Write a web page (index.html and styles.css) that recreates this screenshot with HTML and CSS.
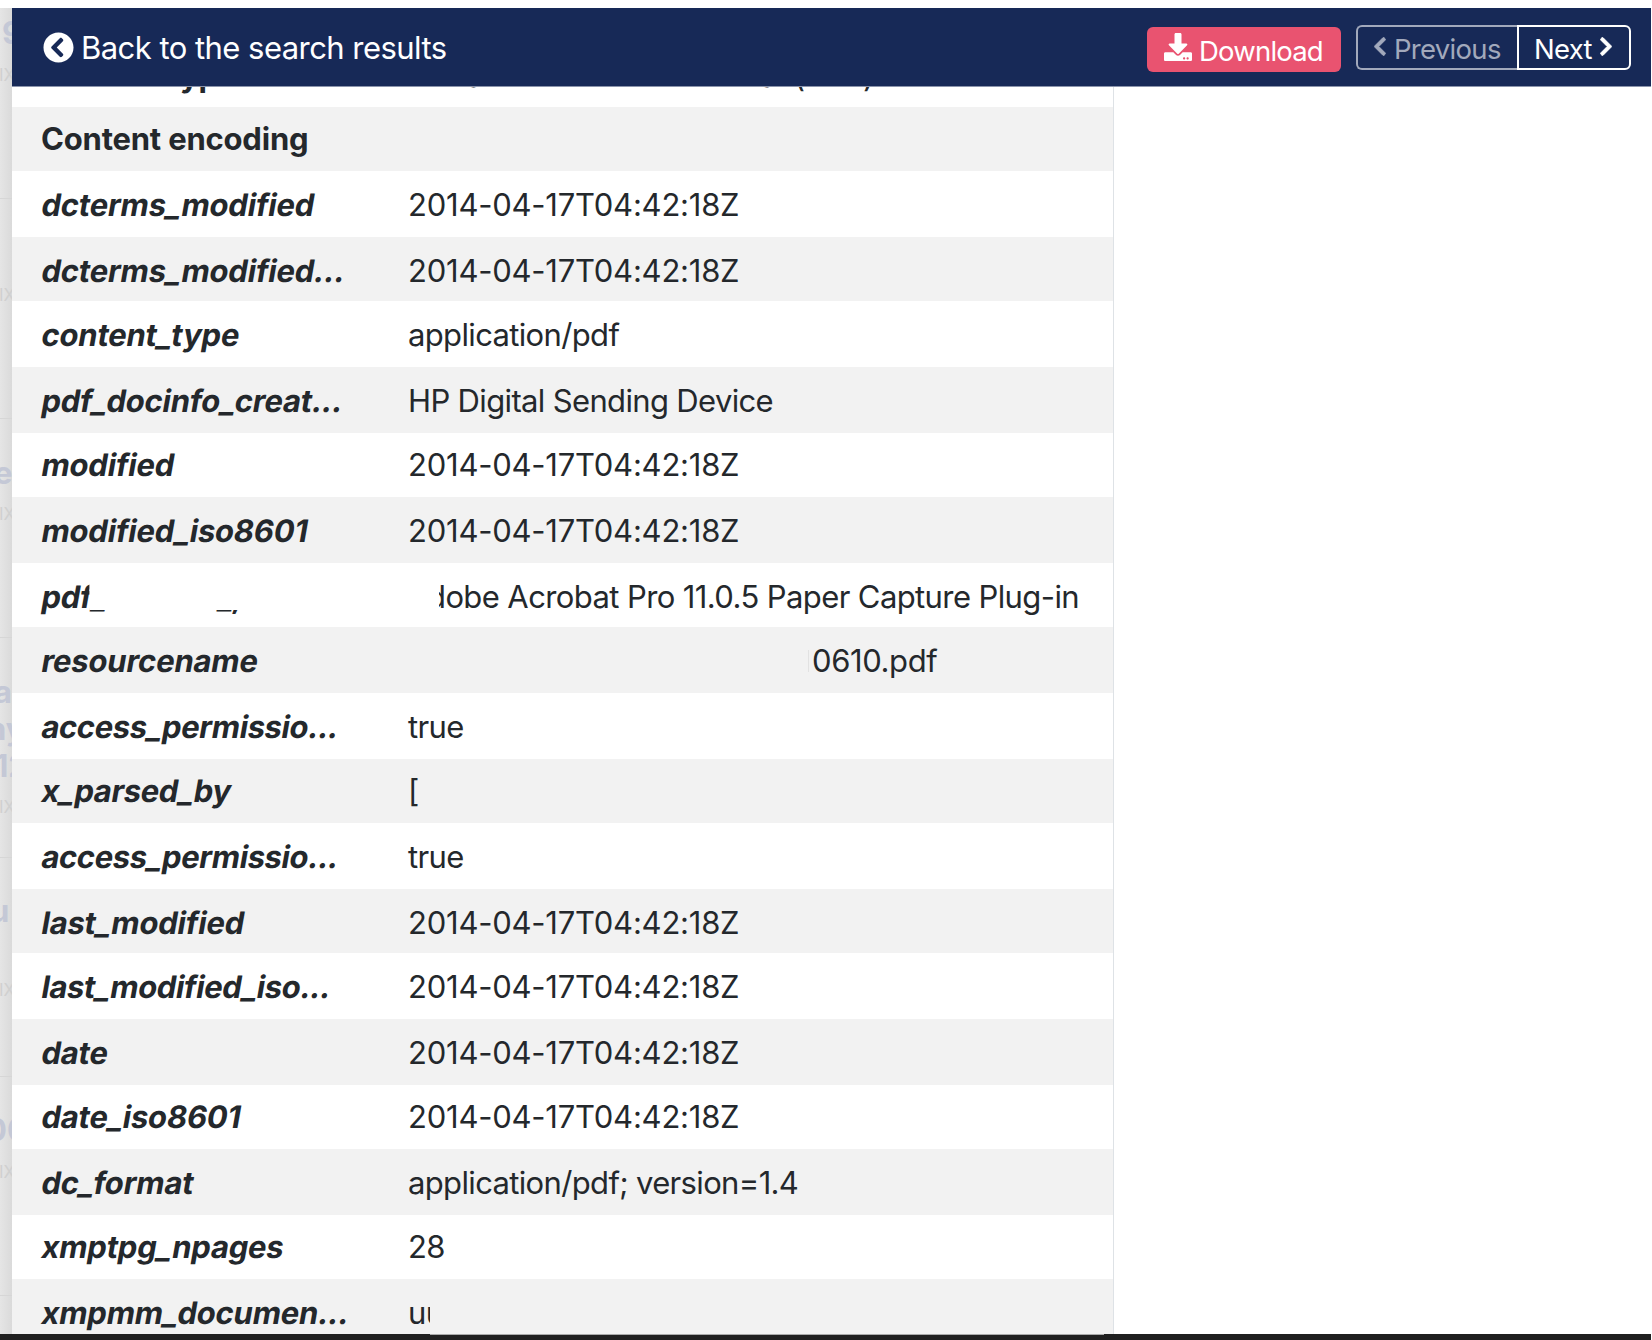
FILE: index.html
```html
<!DOCTYPE html>
<html lang="en">
<head>
<meta charset="utf-8">
<title>Document details</title>
<link rel="stylesheet" href="styles.css">
</head>
<body>
<div class="window">
  <div class="stage">
    <aside class="backdrop" aria-hidden="true">
      <span class="bd-title" style="top:6px;left:2px">9</span>
      <span class="bd-meta" style="top:54px">IX</span>
      <span class="bd-meta" style="top:274px">IX</span>
      <span class="bd-title" style="top:446px;left:-6px">e</span>
      <span class="bd-meta" style="top:493px">IX</span>
      <span class="bd-title" style="top:665px;left:-6px">a</span>
      <span class="bd-title" style="top:702px;left:-13px">ny</span>
      <span class="bd-title" style="top:739px;left:-5px">12</span>
      <span class="bd-meta" style="top:786px">IX</span>
      <span class="bd-title" style="top:884px;left:-10px">u</span>
      <span class="bd-meta" style="top:969px">IX</span>
      <span class="bd-title" style="top:1103px;left:-14px">00</span>
      <span class="bd-meta" style="top:1151px">IX</span>
      <i class="bd-rule" style="top:190px"></i>
      <i class="bd-rule" style="top:410px"></i>
      <i class="bd-rule" style="top:629px"></i>
      <i class="bd-rule" style="top:849px"></i>
      <i class="bd-rule" style="top:1068px"></i>
      <i class="bd-rule" style="top:1287px"></i>
    </aside>
    <main class="panel">
      <header class="topbar">
        <a class="back">
          <svg class="icon-back" viewBox="0 0 512 512"><path d="M256 504C119 504 8 393 8 256S119 8 256 8s248 111 248 248-111 248-248 248zM142.1 273l135.5 135.5c9.4 9.4 24.6 9.4 33.9 0l17-17c9.4-9.4 9.4-24.6 0-33.9L226.9 256l101.6-101.6c9.4-9.4 9.4-24.6 0-33.9l-17-17c-9.4-9.4-24.6-9.4-33.9 0L142.1 239c-9.4 9.4-9.4 24.6 0 34z"/></svg>
          <span>Back to the search results</span>
        </a>
        <a class="download">
          <svg class="icon-download" viewBox="0 0 512 512"><path d="M216 0h80c13.3 0 24 10.7 24 24v168h87.7c17.8 0 26.7 21.5 14.1 34.1L269.7 378.3c-7.5 7.5-19.8 7.5-27.3 0L90.1 226.1c-12.6-12.6-3.7-34.1 14.1-34.1H192V24c0-13.3 10.7-24 24-24zm296 376v112c0 13.3-10.7 24-24 24H24c-13.3 0-24-10.7-24-24V376c0-13.3 10.7-24 24-24h146.7l49 49c20.1 20.1 52.5 20.1 72.6 0l49-49H488c13.3 0 24 10.7 24 24zm-124 88c0-11-9-20-20-20s-20 9-20 20 9 20 20 20 20-9 20-20zm64 0c0-11-9-20-20-20s-20 9-20 20 9 20 20 20 20-9 20-20z"/></svg>
          <span>Download</span>
        </a>
        <nav class="pager">
          <a class="prev"><svg class="chevron" viewBox="0 0 320 512"><path d="M34.52 239.03L228.87 44.69c9.37-9.37 24.57-9.37 33.94 0l22.67 22.67c9.36 9.36 9.37 24.52.04 33.9L131.49 256l154.02 154.75c9.34 9.38 9.32 24.54-.04 33.9l-22.67 22.67c-9.37 9.37-24.57 9.37-33.94 0L34.52 272.97c-9.37-9.37-9.37-24.57 0-33.94z"/></svg><span>Previous</span></a>
          <a class="next"><span>Next</span><svg class="chevron flip" viewBox="0 0 320 512"><path d="M34.52 239.03L228.87 44.69c9.37-9.37 24.57-9.37 33.94 0l22.67 22.67c9.36 9.36 9.37 24.52.04 33.9L131.49 256l154.02 154.75c9.34 9.38 9.32 24.54-.04 33.9l-22.67 22.67c-9.37 9.37-24.57 9.37-33.94 0L34.52 272.97c-9.37-9.37-9.37-24.57 0-33.94z"/></svg></a>
        </nav>
      </header>
      <div class="content">
        <dl class="details">
          <div class="row first"><dt class="plain">Content type</dt><dd>Portable Document Format (PDF)</dd></div>
          <div class="row short"><dt class="plain">Content encoding</dt><dd></dd></div>
          <div class="row"><dt>dcterms_modified</dt><dd class="date">2014-04-17T04:42:18Z</dd></div>
          <div class="row short low"><dt>dcterms_modified...</dt><dd class="date">2014-04-17T04:42:18Z</dd></div>
          <div class="row"><dt>content_type</dt><dd>application/pdf</dd></div>
          <div class="row"><dt>pdf_docinfo_creat...</dt><dd>HP Digital Sending Device</dd></div>
          <div class="row short"><dt>modified</dt><dd class="date">2014-04-17T04:42:18Z</dd></div>
          <div class="row"><dt>modified_iso8601</dt><dd class="date">2014-04-17T04:42:18Z</dd></div>
          <div class="row short low"><dt class="masked-key"><span>pdf_</span><span class="tail">_,</span></dt><dd class="masked-value">dobe Acrobat Pro 11.0.5 Paper Capture Plug-in</dd></div>
          <div class="row"><dt>resourcename</dt><dd class="filename">0610.pdf</dd></div>
          <div class="row"><dt class="tight">access_permissio...</dt><dd>true</dd></div>
          <div class="row short"><dt class="tight">x_parsed_by</dt><dd>[</dd></div>
          <div class="row"><dt class="tight">access_permissio...</dt><dd>true</dd></div>
          <div class="row short low"><dt>last_modified</dt><dd class="date">2014-04-17T04:42:18Z</dd></div>
          <div class="row"><dt class="tight">last_modified_iso...</dt><dd class="date">2014-04-17T04:42:18Z</dd></div>
          <div class="row"><dt>date</dt><dd class="date">2014-04-17T04:42:18Z</dd></div>
          <div class="row short"><dt>date_iso8601</dt><dd class="date">2014-04-17T04:42:18Z</dd></div>
          <div class="row"><dt>dc_format</dt><dd>application/pdf; version=1.4</dd></div>
          <div class="row short"><dt>xmptpg_npages</dt><dd>28</dd></div>
          <div class="row"><dt>xmpmm_documen...</dt><dd class="uuid">uu</dd></div>
        </dl>
      </div>
    </main>
  </div>
  <footer class="edge"><div class="edge-light"></div></footer>
</div>
</body>
</html>
```
FILE: styles.css
```css
* { box-sizing: border-box; }
body {
  margin: 0;
  background: #fff;
  color: #24282c;
  font-family: Inter, "Liberation Sans", sans-serif;
  font-size: 31px;
  line-height: 38px;
}
.window {
  display: flex;
  flex-direction: column;
  width: 1652px;
  height: 1340px;
  padding-top: 8px;
  overflow: hidden;
}
.stage { display: flex; flex: 1; min-height: 0; }
.backdrop {
  position: relative;
  flex: 0 0 12px;
  overflow: hidden;
  background: linear-gradient(90deg, #e5e5e5, #dadada);
}
.bd-title, .bd-meta, .bd-rule { position: absolute; }
.bd-title { color: #c4c8d6; font-size: 31px; font-weight: 700; white-space: nowrap; }
.bd-meta { left: -1px; color: #d0d0d0; font-size: 17px; line-height: 26px; white-space: nowrap; }
.bd-rule { left: 0; width: 12px; height: 1px; background: #d6d6d6; }

.panel { display: flex; flex-direction: column; flex: 1; min-width: 0; }
.topbar {
  display: flex;
  flex: 0 0 79px;
  align-items: center;
  margin-right: 1px;
  padding: 0 20px 0 31px;
  background: #172957;
  border-bottom: 1px solid #8b94ac;
  color: #fff;
  z-index: 1;
}
.back { display: flex; align-items: center; gap: 7px; height: 38px; letter-spacing: -.54px; }
.back span { padding-top: 2px; }
.icon-back { width: 31px; height: 31px; }
svg { display: block; fill: currentColor; }
.download {
  display: flex;
  align-items: center;
  gap: 7px;
  width: 194px;
  height: 45px;
  margin: 4px 15px 0 auto;
  padding-left: 17px;
  border-radius: 6px;
  background: #e95370;
  font-size: 27.5px;
  letter-spacing: -.8px;
}
.download span { padding-top: 3px; }
.icon-download { width: 28px; height: 28px; margin-top: -4px; }
.pager {
  display: flex;
  width: 275px;
  height: 45px;
  font-size: 27.5px;
  letter-spacing: -.7px;
}
.pager a { display: flex; align-items: center; border: 2px solid #fff; }
.pager span { padding-top: 3px; }
.pager .prev { width: 161px; gap: 7px; padding-left: 15px; border-color: #a2a9bc; border-right: 0; border-radius: 6px 0 0 6px; color: #a2a9bc; }
.pager .next { width: 114px; gap: 7px; padding-left: 15px; border-radius: 0 6px 6px 0; }
.chevron { width: 14px; height: 21px; margin-top: -2px; stroke: currentColor; stroke-width: 22; }
.flip { transform: scaleX(-1); }

.content { flex: 1; min-height: 0; overflow: hidden; }
.details { width: 1102px; margin: 0; border-right: 1px solid #dee2e6; }
.row { display: flex; align-items: center; height: 66px; padding-top: 2px; white-space: nowrap; }
.row:nth-child(even) { background: #f2f2f2; }
.row.short { height: 64px; padding-top: 0; }
.row.low { padding-top: 4px; }
.row.first { height: 66px; margin-top: -46px; padding-top: 4px; }
dt {
  width: 367px;
  padding-left: 28px;
  font-weight: 700;
  letter-spacing: -.2px;
  transform: skewX(-10deg);
  transform-origin: 0 78%;
}
dt.plain { padding-left: 29px; transform: none; }
dt.tight { letter-spacing: -.4px; }
dd { margin: 0; padding-left: 29px; letter-spacing: -.65px; }
dd.date { letter-spacing: -.23px; }
.masked-key { position: relative; }
.tail { position: absolute; left: 205px; }
.masked-key::after {
  content: "";
  position: absolute;
  left: 75px;
  top: 0;
  width: 163px;
  height: 32px;
  background: #fff;
  transform: skewX(10deg);
}
.masked-value { position: relative; padding-left: 48px; letter-spacing: -.6px; }
.masked-value::before {
  content: "";
  position: absolute;
  left: 40px;
  top: 0;
  width: 20px;
  height: 36px;
  background: #fff;
}
.filename { display: flex; align-items: center; gap: 3px; padding-left: 429px; letter-spacing: -.4px; }
.filename::before { content: ""; width: 1px; height: 22px; background: #e2e2e2; }
.uuid { width: 51px; overflow: hidden; }

.edge { flex: 0 0 6px; margin-right: 1px; background: #202020; }
.edge-light { width: 674px; height: 1px; margin-left: 430px; background: #aaa; }
```
